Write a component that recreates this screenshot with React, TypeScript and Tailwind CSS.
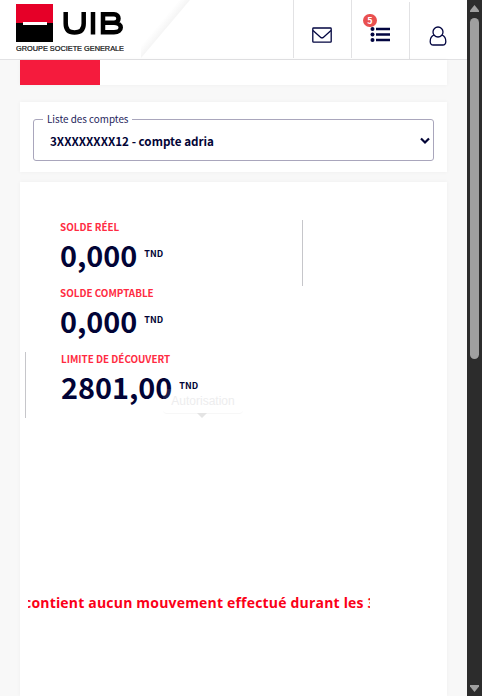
import React from "react";

const sans = "font-['Noto_Sans_CJK_SC',sans-serif]";

function Logo() {
  return (
    <div className="w-[125px] pt-1">
      <div className="flex h-[39px] items-start">
        <div className="h-[38px] w-[37px] shrink-0 bg-black">
          <div className="flex h-[19px] items-end bg-[#e60028] pl-[7px]">
            <div className="relative top-[2px] h-[3px] w-6 bg-white" />
          </div>
        </div>
        <svg className="ml-[10px] mt-[7px] h-6 w-[62px]" viewBox="0 0 62 24" fill="none" stroke="#000" strokeWidth="4.500">
          <path d="M2.700 1V12.500C2.700 18.500 5.500 21.500 11.500 21.500S20.700 18.500 20.700 12.500V1M30 1V23.500M40 3.300H51C57 3.300 57 11.800 51 11.800H40M51 11.800C60 11.800 60 21.300 51 21.300H40M40 1.050V23.550" />
        </svg>
      </div>
      <svg className="block h-[11px] w-[108px]" viewBox="0 0 108 11">
        <text x="0" y="8" textLength="108" lengthAdjust="spacingAndGlyphs" fontFamily="Liberation Sans, sans-serif" fontSize="6.500" fill="#111" stroke="#111" strokeWidth=".2">GROUPE SOCIETE GENERALE</text>
      </svg>
    </div>
  );
}

function Header() {
  return (
    <header className="flex h-[60px] shrink-0 border-b border-[#e2e2e4] bg-white pl-4 text-[#020540]">
      <Logo />
      <svg className="h-[59px] w-[50px]" viewBox="0 0 50 59">
        <defs>
          <linearGradient id="fold" x1="24" y1="29" x2="18" y2="24" gradientUnits="userSpaceOnUse">
            <stop offset="0" stopColor="#f5f5f5" />
            <stop offset="1" stopColor="#fff" />
          </linearGradient>
        </defs>
        <path d="M0 58L49 0H30L0 36Z" fill="url(#fold)" />
      </svg>
      <div className="ml-auto flex">
        <div className="flex h-[58px] w-[58px] items-center justify-center border-l border-[#e2e2e4] pr-[2px] pt-3">
          <svg width="20" height="17" viewBox="0 0 20 17" fill="none" stroke="currentColor" strokeWidth="1.300">
            <rect x=".8" y="1" width="18.400" height="14.200" rx=".8" />
            <path d="M1 3.500L8.500 10.200Q10 11.500 11.500 10.200L19 3.500" />
          </svg>
        </div>
        <div className="relative flex h-[58px] w-[58px] items-center justify-center border-l border-[#e2e2e4] pr-[2px] pt-[10px]">
          <svg width="20" height="17" viewBox="0 0 20 17" fill="currentColor">
            <circle cx="2.500" cy="3" r="2" /><circle cx="2.500" cy="8.500" r="2" /><circle cx="2.500" cy="14" r="2" />
            <path d="M6 1.700H20V4.300H6zM6 7.200H20V9.800H6zM6 12.700H20V15.300H6z" />
          </svg>
          <span className={`${sans} absolute left-[11px] top-[14px] flex h-[13px] w-[14px] items-center justify-center rounded-full bg-[#e95050] text-[9px] font-bold leading-[13px] text-white`}>5</span>
        </div>
        <div className="mt-[2px] flex h-[57px] w-[58px] items-center justify-center border-l border-[#e2e2e4] pr-[2px] pt-[11px]">
          <svg width="18" height="20" viewBox="0 0 18 20" fill="none" stroke="currentColor" strokeWidth="1.300">
            <circle cx="9" cy="6" r="5" />
            <path d="M5 9C2.500 10 1.200 12.500 1.200 15.500C1.200 17.800 2.500 19 4.300 19H13.700C15.500 19 16.800 17.800 16.800 15.500C16.800 12.500 15.500 10 13 9" />
          </svg>
        </div>
      </div>
    </header>
  );
}

interface BalanceProps {
  label: string;
  amount: string;
}

function Balance({ label, amount }: BalanceProps) {
  return (
    <div className={`${sans} h-[66px] pt-px font-bold`}>
      <div className="h-[14px] text-[9.850px] leading-[13px] text-[#ff2b42]">{label}</div>
      <div className="flex items-start text-[#020436]">
        <span className="mt-px text-[28.800px] leading-[38px]">{amount}</span>
        <span className="ml-[7px] mt-[12px] text-[9px] leading-[13px]">TND</span>
      </div>
    </div>
  );
}

export default function App() {
  return (
    <div className={`${sans} flex h-[696px] w-[482px] overflow-hidden bg-[#f8f8f8]`}>
      <div className="flex w-[467px] shrink-0 flex-col">
        <Header />
        <main className="flex grow flex-col pl-5 pr-5">
          <div className="h-[25px] w-[427px] shrink-0 bg-white shadow-[0_0_4px_#0000000c]">
            <div className="h-full w-20 bg-[#f51b3d]" />
          </div>
          <section className="mt-[17px] h-[70px] w-[427px] shrink-0 bg-white px-[13px] pt-[10px] shadow-[0_0_4px_#0000000c]">
            <fieldset className="h-[49px] w-[401px] rounded-[3px] border border-[#a9a6bc] px-[9px]">
              <legend className="h-[15px] px-[4px] text-[9.850px] leading-[15px] text-[#24235a]">Liste des comptes</legend>
              <div className="flex h-[28px] items-center justify-between pl-[7px] text-[#020436]">
                <span className="text-[11.650px] font-bold leading-[18px]">3XXXXXXXX12 - compte adria</span>
                <svg className="relative -right-[6px]" width="10" height="8" viewBox="0 0 10 8" fill="none" stroke="currentColor" strokeWidth="2.200"><path d="M1 1.500L5 5.500L9 1.500" /></svg>
              </div>
            </fieldset>
          </section>
          <section className="mt-[10px] w-[427px] grow bg-white pt-[38px] shadow-[0_0_4px_#0000000c]">
            <div className="flex">
              <div className="flex w-[282px] flex-col">
                <div className="pl-[40px]">
                  <Balance label="SOLDE RÉEL" amount="0,000" />
                  <Balance label="SOLDE COMPTABLE" amount="0,000" />
                </div>
                <div className="relative ml-[5px] border-l border-[#c6c6ca] pl-[35px]">
                  <Balance label="LIMITE DE DÉCOUVERT" amount="2801,00" />
                  <div className="absolute left-[137px] top-[37px] h-[25px] w-[80px] rounded border-b border-[#f7f7f7] bg-white/10 text-center font-['Liberation_Sans',sans-serif] text-[12px] leading-[24px] text-[#ededee]">
                    Autorisation
                    <div className="absolute left-[34px] top-6 border-x-[5px] border-t-[5px] border-x-transparent border-t-[#e4e4e4]" />
                  </div>
                </div>
              </div>
              <div className="h-[66px] w-px bg-[#c6c6ca]" />
            </div>
            <div className="ml-[8px] mt-[174px] flex h-[22px] w-[342px] overflow-hidden whitespace-pre">
              <span className="-ml-[4px] font-['Open_Sans',sans-serif] text-[14px] font-bold leading-[22px] tracking-[0.190px] text-[#fb0018]">contient aucun mouvement effectué durant les 30 derniers jours</span>
            </div>
          </section>
        </main>
      </div>
      <aside className="flex w-[15px] shrink-0 flex-col items-center bg-[#2c2c2c]">
        <svg className="mt-[5px]" width="9" height="7" viewBox="0 0 9 7"><path d="M4.500 0L9 5.500V7H0V5.500Z" fill="#9f9f9f" /></svg>
        <div className="mt-[6px] h-[341px] w-[9px] rounded-full bg-[#9f9f9f]" />
        <svg className="mb-[4px] mt-auto" width="9" height="7" viewBox="0 0 9 7"><path d="M0 0H9V1.500L4.500 7L0 1.500Z" fill="#9f9f9f" /></svg>
      </aside>
    </div>
  );
}
